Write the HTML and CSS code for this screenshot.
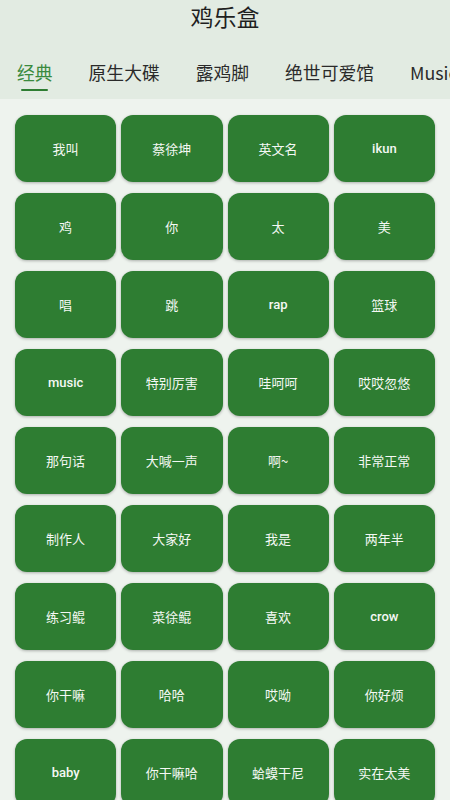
FILE: index.html
```html
<!DOCTYPE html>
<html lang="zh-CN">
<head>
<meta charset="utf-8">
<title>鸡乐盒</title>
<link rel="stylesheet" href="styles.css">
</head>
<body>
<header class="appbar">
  <h1 class="title">鸡乐盒</h1>
  <nav class="tabs">
    <div class="tab active"><span class="tab-label">经典</span><span class="indicator"></span></div>
    <div class="tab"><span class="tab-label">原生大碟</span></div>
    <div class="tab"><span class="tab-label">露鸡脚</span></div>
    <div class="tab"><span class="tab-label">绝世可爱馆</span></div>
    <div class="tab"><span class="tab-label">Music</span></div>
  </nav>
</header>
<main class="grid">
  <button class="pad">我叫</button>
  <button class="pad">蔡徐坤</button>
  <button class="pad">英文名</button>
  <button class="pad latin">ikun</button>
  <button class="pad">鸡</button>
  <button class="pad">你</button>
  <button class="pad">太</button>
  <button class="pad">美</button>
  <button class="pad">唱</button>
  <button class="pad">跳</button>
  <button class="pad latin">rap</button>
  <button class="pad">篮球</button>
  <button class="pad latin">music</button>
  <button class="pad">特别厉害</button>
  <button class="pad">哇呵呵</button>
  <button class="pad">哎哎忽悠</button>
  <button class="pad">那句话</button>
  <button class="pad">大喊一声</button>
  <button class="pad">啊~</button>
  <button class="pad">非常正常</button>
  <button class="pad">制作人</button>
  <button class="pad">大家好</button>
  <button class="pad">我是</button>
  <button class="pad">两年半</button>
  <button class="pad">练习鲲</button>
  <button class="pad">菜徐鲲</button>
  <button class="pad">喜欢</button>
  <button class="pad latin">crow</button>
  <button class="pad">你干嘛</button>
  <button class="pad">哈哈</button>
  <button class="pad">哎呦</button>
  <button class="pad">你好烦</button>
  <button class="pad latin">baby</button>
  <button class="pad">你干嘛哈</button>
  <button class="pad">蛤蟆干尼</button>
  <button class="pad">实在太美</button>
</main>
</body>
</html>
```

FILE: styles.css
```css
html, body {
  margin: 0;
  padding: 0;
}
body {
  width: 450px;
  height: 800px;
  overflow: hidden;
  background: #eef3ee;
  font-family: "Roboto", "Noto Sans CJK SC", sans-serif;
}
.appbar {
  background: #e2ebe2;
  height: 99px;
  box-sizing: border-box;
}
.title {
  margin: 0;
  height: 32px;
  line-height: 32px;
  text-align: center;
  font-size: 23px;
  font-weight: 400;
  color: #1f1f1f;
  font-family: "Noto Sans CJK SC", sans-serif;
}
.tabs {
  display: flex;
  gap: 36px;
  padding-left: 17px;
  white-space: nowrap;
  overflow: hidden;
}
.tab {
  display: flex;
  flex-direction: column;
  align-items: center;
  padding-top: 28px;
  height: 67px;
  box-sizing: border-box;
  flex-shrink: 0;
}
.tab-label {
  font-size: 17.8px;
  line-height: 24px;
  color: #2a2a2a;
  font-family: "Noto Sans CJK SC", sans-serif;
}
.tab.active .tab-label {
  color: #3a8a3e;
}
.indicator {
  display: block;
  width: 27px;
  height: 2.5px;
  margin-top: 4.5px;
  border-radius: 2px;
  background: #2e7d32;
}
.grid {
  display: grid;
  grid-template-columns: repeat(4, 1fr);
  grid-auto-rows: 67px;
  column-gap: 5px;
  row-gap: 11px;
  padding: 16px 15px 0 15px;
}
.pad {
  border: none;
  margin: 0;
  padding: 0;
  background: #2e7d32;
  color: #f4f8f4;
  border-radius: 12px;
  box-shadow: 0 1px 3px rgba(0, 0, 0, 0.28);
  font-family: "Noto Sans CJK SC", sans-serif;
  font-size: 13px;
  font-weight: 400;
  text-align: center;
  cursor: pointer;
}
.pad.latin {
  font-family: "Roboto", sans-serif;
  font-weight: 500;
}
```
